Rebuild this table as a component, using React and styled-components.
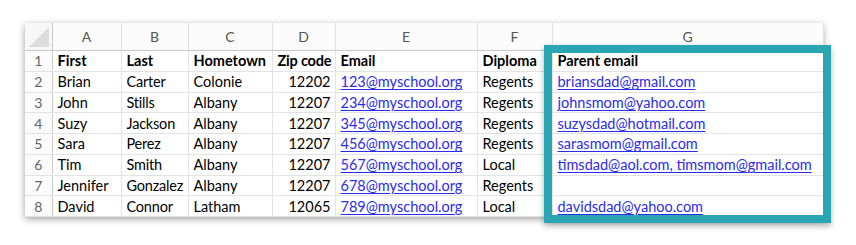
import React from "react";
import styled, { createGlobalStyle } from "styled-components";

const Global = createGlobalStyle`
  html, body { margin: 0; padding: 0; background: #fff; }
  body { font-family: "Lato", "Liberation Sans", sans-serif; }
`;

const Page = styled.div`
  padding: 23px 0 0 25px;
  width: 856px;
  height: 245px;
  box-sizing: border-box;
`;

const SheetWrap = styled.div`
  position: relative;
  width: 798px;
  box-shadow: 0 2px 7px rgba(0, 0, 0, 0.38);
  background: #fff;
`;

const Table = styled.table`
  border-collapse: collapse;
  table-layout: fixed;
  width: 798px;
  font-family: "Lato", "Liberation Sans", sans-serif;
  font-size: 14.5px;
  color: #000;
`;

const ColHead = styled.th`
  height: 27px;
  padding: 0;
  font-weight: 400;
  font-size: 14px;
  color: #555;
  background: #fbfbfb;
  text-align: center;
  border-right: 1px solid #e0e0e0;
  border-bottom: 1px solid #c9c9c9;
`;

const Corner = styled.th`
  padding: 0;
  background: #f7f7f7;
  border-right: 1px solid #c9c9c9;
  border-bottom: 1px solid #c9c9c9;
  position: relative;
  &::after {
    content: "";
    position: absolute;
    right: 3px;
    bottom: 3px;
    width: 0;
    height: 0;
    border-left: 20px solid transparent;
    border-bottom: 20px solid #dcdcdc;
  }
`;

const RowHead = styled.td`
  padding: 0;
  text-align: center;
  color: #666;
  font-size: 14px;
  background: #fbfbfb;
  border-right: 1px solid #c9c9c9;
  border-bottom: 1px solid #e3e3e3;
`;

const Cell = styled.td`
  height: 19.75px;
  padding: 0 4px 0 5px;
  white-space: nowrap;
  overflow: visible;
  text-align: ${(p) => (p.$num ? "right" : "left")};
  font-weight: ${(p) => (p.$bold ? 700 : 400)};
  letter-spacing: ${(p) => (p.$tight ? "-0.2px" : "0")};
  border-right: 1px solid #e3e3e3;
  border-bottom: 1px solid #e3e3e3;
  line-height: 19px;
`;

const Link = styled.a`
  color: #2b2bee;
  text-decoration: underline;
  text-underline-offset: 1.5px;
`;

const Highlight = styled.div`
  position: absolute;
  left: 519px;
  top: 22px;
  width: 287px;
  height: 178px;
  box-sizing: border-box;
  border: 8px solid #29a6b2;
  box-shadow: 0 3px 6px rgba(0, 0, 0, 0.3);
  pointer-events: none;
`;

const widths = [27, 69, 67, 84, 63, 142, 75, 271];
const letters = ["A", "B", "C", "D", "E", "F", "G"];

const rows = [
  ["Brian", "Carter", "Colonie", "12202", "123@myschool.org", "Regents", "briansdad@gmail.com"],
  ["John", "Stills", "Albany", "12207", "234@myschool.org", "Regents", "johnsmom@yahoo.com"],
  ["Suzy", "Jackson", "Albany", "12207", "345@myschool.org", "Regents", "suzysdad@hotmail.com"],
  ["Sara", "Perez", "Albany", "12207", "456@myschool.org", "Regents", "sarasmom@gmail.com"],
  ["Tim", "Smith", "Albany", "12207", "567@myschool.org", "Local", "timsdad@aol.com, timsmom@gmail.com"],
  ["Jennifer", "Gonzalez", "Albany", "12207", "678@myschool.org", "Regents", ""],
  ["David", "Connor", "Latham", "12065", "789@myschool.org", "Local", "davidsdad@yahoo.com"],
];

export default function App() {
  return (
    <>
      <Global />
      <Page>
        <SheetWrap>
          <Table>
            <colgroup>
              {widths.map((w, i) => (
                <col key={i} style={{ width: w }} />
              ))}
            </colgroup>
            <thead>
              <tr>
                <Corner />
                {letters.map((l) => (
                  <ColHead key={l}>{l}</ColHead>
                ))}
              </tr>
            </thead>
            <tbody>
              <tr>
                <RowHead>1</RowHead>
                <Cell $bold>First</Cell>
                <Cell $bold>Last</Cell>
                <Cell $bold>Hometown</Cell>
                <Cell $bold $tight>Zip code</Cell>
                <Cell $bold>Email</Cell>
                <Cell $bold>Diploma</Cell>
                <Cell $bold>Parent email</Cell>
              </tr>
              {rows.map((r, i) => (
                <tr key={i}>
                  <RowHead>{i + 2}</RowHead>
                  <Cell>{r[0]}</Cell>
                  <Cell $tight>{r[1]}</Cell>
                  <Cell>{r[2]}</Cell>
                  <Cell $num>{r[3]}</Cell>
                  <Cell>
                    <Link href="#">{r[4]}</Link>
                  </Cell>
                  <Cell>{r[5]}</Cell>
                  <Cell>{r[6] && <Link href="#">{r[6]}</Link>}</Cell>
                </tr>
              ))}
            </tbody>
          </Table>
          <Highlight />
        </SheetWrap>
      </Page>
    </>
  );
}
